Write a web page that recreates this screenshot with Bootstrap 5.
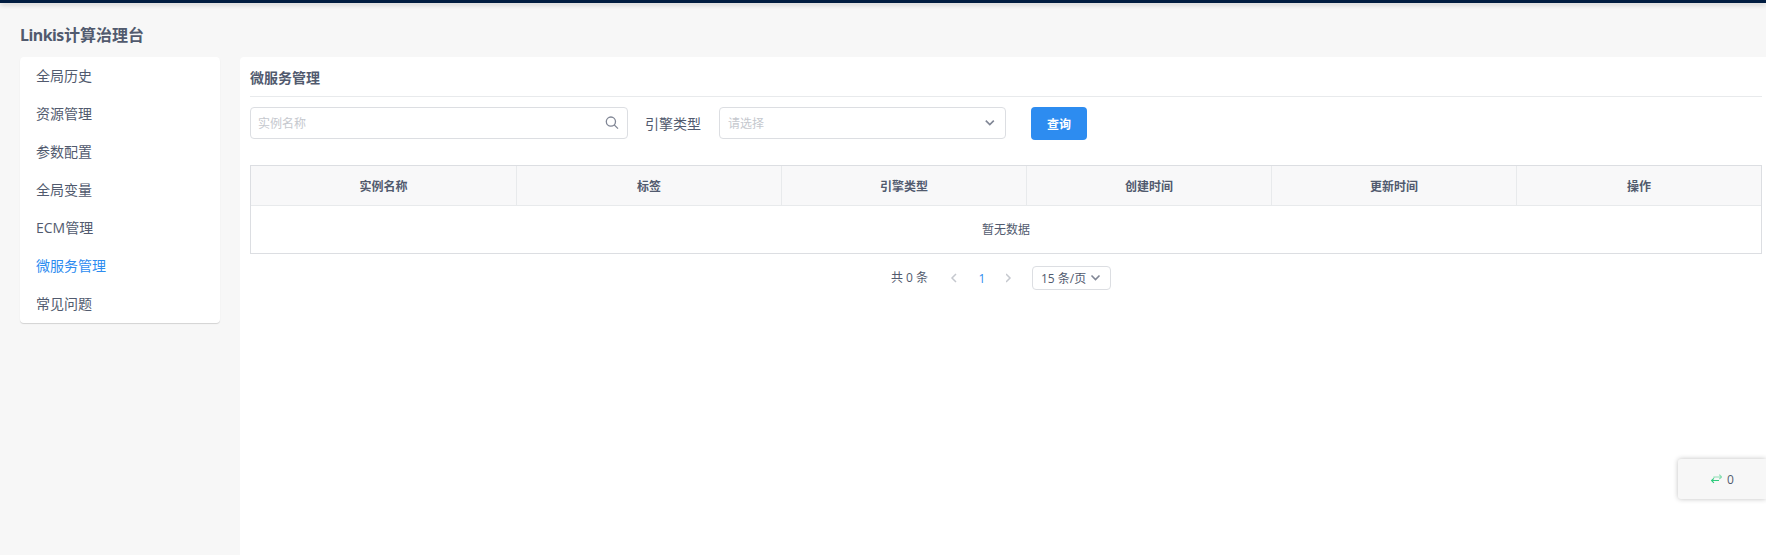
<!DOCTYPE html>
<html lang="zh-CN">
<head>
<meta charset="utf-8">
<meta name="viewport" content="width=device-width, initial-scale=1">
<title>Linkis计算治理台</title>
<link rel="stylesheet" href="https://cdn.jsdelivr.net/npm/bootstrap@5.3.0/dist/css/bootstrap.min.css">
<style>
body{height:100vh;overflow:hidden;background:#f7f7f7;color:#515a6e;font:12px/1.5 "Open Sans","Noto Sans CJK SC",sans-serif}
.topbar{height:3px;background:#001c40;box-shadow:0 2px 5px rgba(0,0,0,.2)}
.app-title{font-size:16px;line-height:24px;font-weight:700;margin:20px 0 10px 20px;height:24px}
.app-title span{letter-spacing:-.5px;font-family:"Noto Sans","Open Sans",sans-serif}
.side{width:200px;height:266px;margin-left:20px;border-radius:4px;box-shadow:0 1px 1px rgba(0,0,0,.15);flex:none}
.side .nav-link{height:38px;line-height:37px;padding:0 16px;font-size:14px;color:#515a6e}
.side .nav-link.active{color:#2d8cf0}
.panel{margin-left:20px;padding:0 4px 0 10px;border-top-left-radius:4px;min-width:0}
.panel-title{font-size:14px;font-weight:700;height:40px;line-height:41px;border-bottom:1px solid #e8eaec;margin:0 0 10px}
.field{height:32px;border:1px solid #dcdee2;border-radius:4px;color:#c5c8ce;padding:0 8px}
.field span{padding-top:2px}
.field svg{color:#808695}
.field-name{width:378px;padding-left:7px}
.field-type{width:287px}
.field-label{width:91px;padding-left:17px;font-size:14px;line-height:34px}
.btn-query{width:56px;height:33px;margin-left:25px;padding:1px 0 0;font-size:12px;font-weight:700;line-height:31px;color:#fff;background:#2d8cf0;border:0;border-radius:4px}
.grid-table{table-layout:fixed;border:1px solid #dcdee2;margin:24px 0 0;color:#515a6e;border-collapse:separate;border-spacing:0;height:89px}
.grid-table th{vertical-align:middle;background:#f8f8f9;height:40px;padding:2px 0 0;border:0;border-bottom:1px solid #e8eaec;border-right:1px solid #e8eaec;color:#515a6e}
.grid-table th:last-child{border-right:0}
.grid-table td{border:0;padding:0;height:47px;color:#515a6e}
.pager{margin-top:12px;height:24px;padding-left:641px;line-height:24px}
.pager-total{width:59px;line-height:22px;padding-bottom:1px}
.pager-current{width:48px;text-align:center;color:#2d8cf0;padding-top:2px}
.pager-size{width:79px;height:24px;margin-left:18px;border:1px solid #dcdee2;border-radius:4px;padding-left:8px;line-height:23px}
.pager-size span{padding-top:1px}
.jobs{right:0;top:459px;width:88px;height:40px;background:#f7f7f7;border-radius:3px 0 0 3px;box-shadow:0 0 5px rgba(0,0,0,.25);padding-left:33px;gap:5px}
.jobs span{padding-top:1px}
</style>
</head>
<body class="d-flex flex-column">
<header class="topbar flex-shrink-0"></header>
<h1 class="app-title flex-shrink-0"><span>Linkis</span>计算治理台</h1>
<div class="d-flex flex-grow-1">
  <nav class="side nav flex-column flex-nowrap bg-white">
    <a class="nav-link" href="#">全局历史</a>
    <a class="nav-link" href="#">资源管理</a>
    <a class="nav-link" href="#">参数配置</a>
    <a class="nav-link" href="#">全局变量</a>
    <a class="nav-link" href="#">ECM管理</a>
    <a class="nav-link active" href="#">微服务管理</a>
    <a class="nav-link" href="#">常见问题</a>
  </nav>
  <main class="panel bg-white flex-grow-1">
    <h2 class="panel-title">微服务管理</h2>
    <div class="d-flex align-items-start">
      <div class="field field-name d-flex align-items-center justify-content-between"><span>实例名称</span>
        <svg width="14" height="14" viewBox="0 0 14 14" fill="none" stroke="currentColor" stroke-width="1.3"><circle cx="5.9" cy="5.6" r="4.6"/><path d="M9.2 8.9 13 12.6"/></svg>
      </div>
      <div class="field-label">引擎类型</div>
      <div class="field field-type d-flex align-items-center justify-content-between"><span>请选择</span>
        <svg width="14" height="14" viewBox="0 0 14 14" fill="none" stroke="currentColor" stroke-width="1.6"><path d="m2.8 4.6 4 4 4-4"/></svg>
      </div>
      <button class="btn btn-query" type="button">查询</button>
    </div>
    <table class="table grid-table text-center align-middle">
      <colgroup><col style="width:266px"><col style="width:265px"><col style="width:245px"><col style="width:245px"><col style="width:245px"><col></colgroup>
      <thead><tr><th>实例名称</th><th>标签</th><th>引擎类型</th><th>创建时间</th><th>更新时间</th><th>操作</th></tr></thead>
      <tbody><tr><td colspan="6">暂无数据</td></tr></tbody>
    </table>
    <div class="pager d-flex align-items-center">
      <span class="pager-total">共 0 条</span>
      <svg width="8" height="12" viewBox="0 0 8 12" fill="none" stroke="#c5c8ce" stroke-width="1.5"><path d="M6 2 2 6l4 4"/></svg>
      <span class="pager-current">1</span>
      <svg class="ms-n1" width="8" height="12" viewBox="0 0 8 12" fill="none" stroke="#c5c8ce" stroke-width="1.5"><path d="m0 2 4 4-4 4"/></svg>
      <div class="pager-size d-flex align-items-center"><span>15 条/页</span>
        <svg class="ms-1" width="12" height="12" viewBox="0 0 12 12" fill="none" stroke="#808695" stroke-width="1.6"><path d="m1.5 3.5 4 4 4-4"/></svg>
      </div>
    </div>
  </main>
</div>
<div class="jobs position-absolute d-flex align-items-center">
  <svg width="11" height="10" viewBox="0 0 11 10" fill="none" stroke-width="1.1"><path stroke="#8ddfb4" d="M3 4V3h7.5M8.3.7l2.3 2.3-2.3 2"/><path stroke="#2fcb7d" d="M8 6.5H.7M2.9 4.3.6 6.5l2.3 2.3"/></svg>
  <span>0</span>
</div>
<script src="https://cdn.jsdelivr.net/npm/bootstrap@5.3.0/dist/js/bootstrap.bundle.min.js"></script>
</body>
</html>
